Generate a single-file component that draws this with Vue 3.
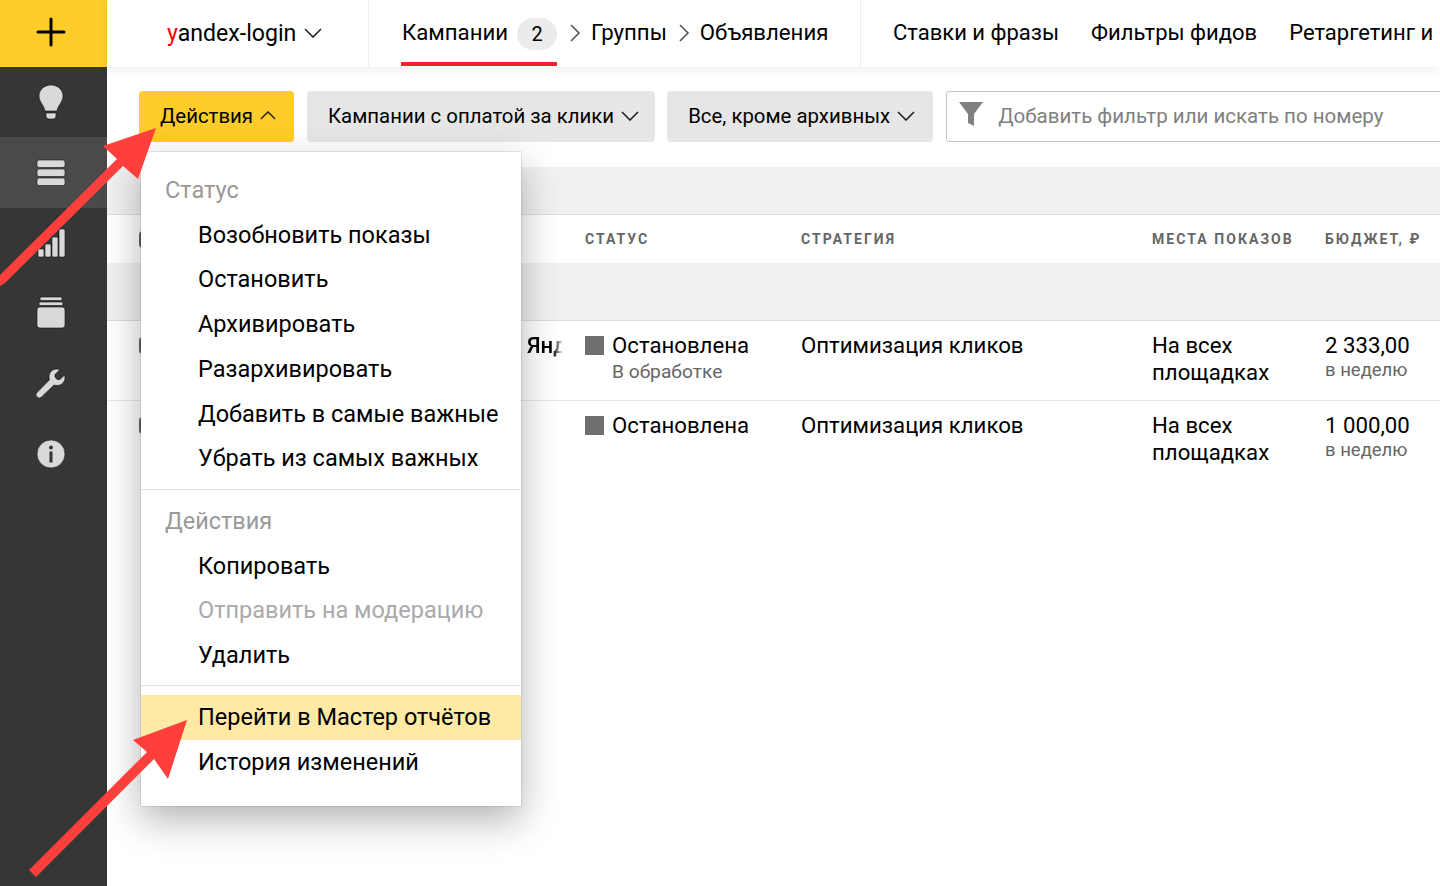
<template>
  <div class="page">
    <aside class="side">
      <button class="add">
        <svg width="30" height="30" viewBox="0 0 30 30"><path d="M15 2v26M2 15h26" stroke="#000" stroke-width="3" stroke-linecap="round" /></svg>
      </button>
      <div class="side-item">
        <svg width="32" height="36" viewBox="0 0 32 36" fill="#d9d9d9" stroke="#111" stroke-width=".6"><path d="M16 1C9 1 4 6 4 12c0 6 5 9 6 15h12c1-6 6-9 6-15 0-6-5-11-12-11z" /><path d="M11 29h10v3a3 3 0 0 1-3 3h-4a3 3 0 0 1-3-3z" /></svg>
      </div>
      <div class="side-item active">
        <svg width="32" height="32" viewBox="0 0 32 32" fill="#d9d9d9" stroke="#111" stroke-width=".6"><rect x="2" y="3" width="28" height="7.5" rx="2" /><rect x="2" y="12" width="28" height="7.5" rx="2" /><rect x="2" y="21" width="28" height="7.5" rx="2" /></svg>
      </div>
      <div class="side-item">
        <svg width="32" height="32" viewBox="0 0 32 32" fill="#d9d9d9" stroke="#111" stroke-width=".6"><rect x="3" y="22" width="6" height="8" rx="1.5" /><rect x="10" y="17" width="6" height="13" rx="1.5" /><rect x="17" y="10" width="6" height="20" rx="1.5" /><rect x="24" y="2" width="6" height="28" rx="1.5" /></svg>
      </div>
      <div class="side-item">
        <svg width="32" height="34" viewBox="0 0 32 34" fill="#d9d9d9" stroke="#111" stroke-width=".6"><rect x="5" y="1" width="22" height="3.5" rx="1.5" /><rect x="4" y="6" width="24" height="3.5" rx="1.5" /><rect x="2" y="11" width="28" height="21" rx="3" /></svg>
      </div>
      <div class="side-item">
        <svg width="32" height="32" viewBox="0 0 32 32" fill="#d9d9d9" stroke="#111" stroke-width=".6"><path d="M22 1c-4.500 0-8 3.500-8 8 0 1 .2 2 .5 2.800L2 24.500a3.200 3.200 0 0 0 0 4.500 3.200 3.200 0 0 0 4.500 0L19 17c1 .3 2 .5 3 .5 4.500 0 8-3.500 8-8 0-1-.2-1.800-.4-2.600L25 11.500h-3L20 9V6.500L24.500 2C23.700 1.400 22.900 1 22 1z" /></svg>
      </div>
      <div class="side-item">
        <svg width="32" height="32" viewBox="0 0 32 32"><circle cx="16" cy="16" r="14" fill="#d9d9d9" stroke="#111" stroke-width=".6" /><circle cx="16" cy="9.500" r="2" fill="#333" /><rect x="14.500" y="13.500" width="3" height="11" fill="#333" /></svg>
      </div>
    </aside>

    <main class="main">
      <header class="top">
        <div class="login">
          <span><i class="red">y</i>andex-login</span>
          <svg class="chev" width="18" height="10" viewBox="0 0 18 10"><path d="M1 1l8 8 8-8" /></svg>
        </div>
        <nav class="crumbs">
          <div class="tab">Кампании <span class="count">2</span></div>
          <svg class="sep" width="11" height="18" viewBox="0 0 11 18"><path d="M1 1l8 8-8 8" /></svg>
          <span>Группы</span>
          <svg class="sep" width="11" height="18" viewBox="0 0 11 18"><path d="M1 1l8 8-8 8" /></svg>
          <span>Объявления</span>
        </nav>
        <nav class="links">
          <span>Ставки и фразы</span>
          <span>Фильтры фидов</span>
          <span>Ретаргетинг и</span>
        </nav>
      </header>

      <div class="tools">
        <button class="btn yellow">Действия
          <svg class="chev" width="16" height="9" viewBox="0 0 18 10"><path d="M1 9l8-8 8 8" /></svg>
        </button>
        <button class="btn">Кампании с оплатой за клики
          <svg class="chev" width="18" height="10" viewBox="0 0 18 10"><path d="M1 1l8 8 8-8" /></svg>
        </button>
        <button class="btn third">Все, кроме архивных
          <svg class="chev" width="18" height="10" viewBox="0 0 18 10"><path d="M1 1l8 8 8-8" /></svg>
        </button>
        <div class="search">
          <svg width="24" height="25" viewBox="0 0 24 25"><path d="M0 0h24L15 12v12l-6-3v-9z" fill="#808080" /></svg>
          <span>Добавить фильтр или искать по номеру</span>
        </div>
      </div>

      <div class="band first"></div>
      <div class="row head">
        <div class="cell"><span class="check"></span></div>
        <div class="cell">Статус</div>
        <div class="cell">Стратегия</div>
        <div class="cell">Места показов</div>
        <div class="cell">Бюджет, ₽</div>
      </div>
      <div class="band second"></div>
      <div v-for="(r, i) in rows" :key="r.budget" class="row data" :class="{ lined: i === 0 }">
        <div class="cell name">
          <span class="check"></span>
          <span v-if="r.name" class="camp">{{ r.name }}</span>
        </div>
        <div class="cell status">
          <span class="square"></span>
          <div>
            <div>Остановлена</div>
            <div v-if="r.note" class="sub">{{ r.note }}</div>
          </div>
        </div>
        <div class="cell">Оптимизация кликов</div>
        <div class="cell">На всех<br>площадках</div>
        <div class="cell">
          <div>{{ r.budget }}</div>
          <div class="sub low">в неделю</div>
        </div>
      </div>

      <div class="menu">
        <template v-for="(g, i) in groups" :key="i">
          <div v-if="g.title" class="menu-title">{{ g.title }}</div>
          <div
            v-for="it in g.items"
            :key="it.text"
            class="menu-item"
            :class="{ off: it.off, hot: it.hot }"
          >{{ it.text }}</div>
          <div v-if="i < groups.length - 1" class="menu-line" :class="{ tight: i === 1 }"></div>
        </template>
      </div>
    </main>

    <svg class="arrows" width="1440" height="886" viewBox="0 0 1440 886">
      <polygon points="156,128 103,146 117,159 0,275 0,286 5,283 123,166 138,179" />
      <polygon points="187,720 133,740 147,752 29,870 36,877 154,759 168,779" />
    </svg>
  </div>
</template>

<script setup>
const rows = [
  { name: 'Янд', note: 'В обработке', budget: '2 333,00' },
  { name: '', note: '', budget: '1 000,00' },
]

const groups = [
  {
    title: 'Статус',
    items: [
      { text: 'Возобновить показы' },
      { text: 'Остановить' },
      { text: 'Архивировать' },
      { text: 'Разархивировать' },
      { text: 'Добавить в самые важные' },
      { text: 'Убрать из самых важных' },
    ],
  },
  {
    title: 'Действия',
    items: [
      { text: 'Копировать' },
      { text: 'Отправить на модерацию', off: true },
      { text: 'Удалить' },
    ],
  },
  {
    title: '',
    items: [
      { text: 'Перейти в Мастер отчётов', hot: true },
      { text: 'История изменений' },
    ],
  },
]
</script>

<style>
html, body { margin: 0; height: 100%; overflow: hidden; background: #fff; }
</style>

<style scoped>
.page {
  position: relative;
  display: flex;
  width: 1440px;
  height: 886px;
  overflow: hidden;
  font-family: Roboto, "Liberation Sans", sans-serif;
  font-size: 22.2px;
  color: #000;
}
.side { width: 107px; flex-shrink: 0; background: #363636; }
.add {
  display: flex;
  align-items: center;
  justify-content: center;
  width: 100%;
  height: 67px;
  padding: 0 5px 4px 0;
  border: 0;
  background: #ffcc29;
}
.side-item { display: flex; align-items: center; justify-content: center; height: 70.4px; padding-right: 5px; box-sizing: border-box; }
.side-item.active { background: #4a4a4a; }

.main { position: relative; flex: 1; min-width: 0; }
.top {
  position: relative;
  z-index: 1;
  display: flex;
  height: 67px;
  background: #fff;
  box-shadow: 0 2px 10px rgba(0, 0, 0, .08);
  white-space: nowrap;
  overflow: hidden;
}
.login {
  display: flex;
  align-items: center;
  gap: 8px;
  width: 262px;
  flex-shrink: 0;
  padding: 0 0 1px 60px;
  box-sizing: border-box;
  border-right: 1px solid #ececec;
  font-size: 23.1px;
}
.red { color: #f00; font-style: normal; }
.chev { fill: none; stroke: #222; stroke-width: 1.6; flex-shrink: 0; }
.crumbs {
  display: flex;
  align-items: center;
  width: 492px;
  flex-shrink: 0;
  padding: 0 0 3px 33px;
  box-sizing: border-box;
  border-right: 1px solid #ececec;
}
.tab {
  position: relative;
  display: flex;
  align-items: center;
  gap: 9px;
  align-self: stretch;
  margin-right: 13px;
}
.tab::after {
  content: "";
  position: absolute;
  left: -1px;
  right: 0;
  bottom: -2px;
  height: 4px;
  background: #f5222d;
}
.count {
  width: 40px;
  height: 32px;
  margin-top: 3px;
  line-height: 32px;
  border-radius: 16px;
  background: #ebebeb;
  text-align: center;
  font-size: 20px;
}
.sep { fill: none; stroke: #555; stroke-width: 1.6; margin: 2px 10px 0 0; }
.crumbs span + .sep { margin-left: 12px; }
.links { display: flex; align-items: center; gap: 32px; padding: 0 0 3px 32px; font-size: 22px; }

.tools { display: flex; gap: 13px; height: 51px; margin-top: 24px; padding-left: 32px; }
.btn {
  display: flex;
  align-items: center;
  gap: 7px;
  flex-shrink: 0;
  padding: 0 16px 2px 21px;
  border: 0;
  border-radius: 4px;
  background: #e6e6e6;
  color: #000;
  font: inherit;
  font-size: 20.4px;
}
.btn.yellow { background: #ffcc29; padding-right: 18px; }
.btn.third { margin-left: -1px; padding-right: 18px; }
.search {
  display: flex;
  align-items: center;
  gap: 15px;
  flex: 1;
  margin-right: -10px;
  padding: 0 0 2px 12px;
  border: 1px solid #c4c4c4;
  border-radius: 3px;
  color: #7f7f7f;
  font-size: 20.5px;
  white-space: nowrap;
}
.search svg { margin-bottom: 2px; }

.band { background: #f1f1f1; }
.band.first { height: 47px; margin-top: 25px; border-bottom: 1px solid #ddd; }
.band.second { height: 57px; border-bottom: 1px solid #ddd; }
.row {
  display: grid;
  grid-template-columns: 446px 216px 351px 173px 1fr;
  padding-left: 32px;
}
.head {
  align-items: center;
  height: 48px;
  font-size: 14px;
  font-weight: 700;
  letter-spacing: 2.05px;
  text-transform: uppercase;
  color: #666;
}
.data {
  height: 80px;
  box-sizing: border-box;
  padding-top: 11px;
  line-height: 26.5px;
  white-space: nowrap;
}
.data.lined { border-bottom: 1px solid #e8e8e8; }
.check {
  display: inline-block;
  width: 17px;
  height: 17px;
  box-sizing: border-box;
  border: 2px solid #666;
  border-radius: 4px;
  vertical-align: middle;
}
.data .check { vertical-align: top; margin-top: 5px; }
.name { position: relative; }
.camp {
  position: absolute;
  left: 388px;
  top: 0;
  width: 36px;
  overflow: hidden;
  font-weight: 500;
  -webkit-mask-image: linear-gradient(90deg, #000 72%, transparent);
  mask-image: linear-gradient(90deg, #000 72%, transparent);
}
.status { display: flex; gap: 8px; }
.square { width: 19px; height: 19px; margin-top: 4px; background: #6f6f6f; flex-shrink: 0; }
.sub { font-size: 19.200px; color: #666; }
.low { font-size: 18.500px; line-height: 22px; }

.menu {
  position: absolute;
  left: 34px;
  top: 152px;
  width: 380px;
  height: 654px;
  box-sizing: border-box;
  padding-top: 16px;
  background: #fff;
  box-shadow: 0 0 0 1px rgba(0, 0, 0, .08), 0 14px 36px rgba(0, 0, 0, .3);
  line-height: 44.7px;
  font-size: 23.500px;
}
.menu-title { padding-left: 24px; color: #999; }
.menu-item { padding-left: 57px; white-space: nowrap; }
.menu-item.off { color: #aaa; }
.menu-item.hot { background: #fee9a5; line-height: 45px; }
.menu-line { height: 1px; margin: 8px 0 9px; background: #e2e2e2; }
.menu-line.tight { margin-top: 7px; }

.arrows { position: absolute; left: 0; top: 0; pointer-events: none; }
.arrows polygon { fill: #fe3f3c; }
</style>
